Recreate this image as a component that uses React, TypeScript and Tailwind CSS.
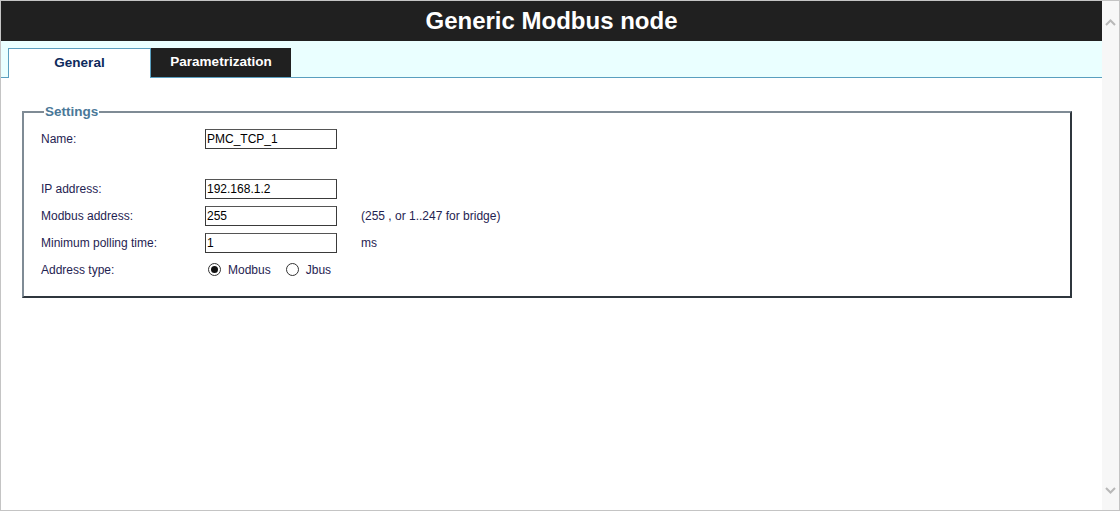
import React from 'react'

const font = { fontFamily: '"Liberation Sans", Arial, sans-serif' }

function Row({ label, children }: { label: string; children: React.ReactNode }) {
  return (
    <div className="flex items-center h-[27px]">
      <div className="w-[164px] text-[12px] text-[#1f2352]">{label}</div>
      {children}
    </div>
  )
}

function Field({ value }: { value: string }) {
  return (
    <input
      defaultValue={value}
      className="w-[132px] h-[20px] border border-[#3a3a3a] border-t-[#555] px-[1px] text-[12px] text-black bg-white outline-none"
      style={font}
    />
  )
}

function Radio({ checked, label }: { checked?: boolean; label: string }) {
  return (
    <label className="flex items-center gap-[7px] mr-[15px]">
      <span className="w-[13px] h-[13px] rounded-full border border-[#333] bg-white flex items-center justify-center">
        {checked && <span className="w-[7px] h-[7px] rounded-full bg-[#111]" />}
      </span>
      <span className="text-[12px] text-[#1f2352]">{label}</span>
    </label>
  )
}

export default function App() {
  return (
    <div className="w-[1120px] h-[511px] border border-[#c4c4c4] flex overflow-hidden bg-white" style={font}>
      <div className="flex-1 flex flex-col">
        <div className="h-[40px] bg-[#202020] text-white font-bold text-[24px] flex items-center justify-center">
          Generic Modbus node
        </div>
        <div className="h-[37px] bg-[#eaffff] border-b border-[#5a9fbf] flex items-end pl-[7px]">
          <div className="w-[143px] h-[30px] -mb-px bg-white border border-b-0 border-[#5a9fbf] flex items-center justify-center text-[13.5px] font-bold text-[#0d2a5c]">
            General
          </div>
          <div className="w-[140px] h-[29px] bg-[#202020] flex items-center justify-center text-[13.5px] font-bold text-white pb-[1px]">
            Parametrization
          </div>
        </div>
        <div className="pl-[21px] pr-[30px] pt-[24px]">
          <fieldset className="border-2 border-t-[#7f8b95] border-l-[#7f8b95] border-r-[#2f363d] border-b-[#2f363d] pl-[17px] pb-[13px] pt-[3px]">
            <legend className="ml-[3px] px-[1px] text-[13.5px] font-bold text-[#4a7898]">Settings</legend>
            <Row label="Name:">
              <Field value="PMC_TCP_1" />
            </Row>
            <div className="h-[23px]" />
            <Row label="IP address:">
              <Field value="192.168.1.2" />
            </Row>
            <Row label="Modbus address:">
              <Field value="255" />
              <span className="ml-[24px] text-[12px] text-[#1f2352]">(255 , or 1..247 for bridge)</span>
            </Row>
            <Row label="Minimum polling time:">
              <Field value="1" />
              <span className="ml-[24px] text-[12px] text-[#1f2352]">ms</span>
            </Row>
            <Row label="Address type:">
              <div className="flex items-center pl-[3px]">
                <Radio checked label="Modbus" />
                <Radio label="Jbus" />
              </div>
            </Row>
          </fieldset>
        </div>
      </div>
      <div className="w-[17px] shrink-0 bg-[#f7f7f7] flex flex-col items-center justify-between pt-[18px] pb-[16px]">
        <svg width="11" height="7" viewBox="0 0 11 7">
          <path d="M1 6 L5.5 1.5 L10 6" fill="none" stroke="#b8b8b8" strokeWidth="2" />
        </svg>
        <svg width="11" height="7" viewBox="0 0 11 7">
          <path d="M1 1 L5.5 5.5 L10 1" fill="none" stroke="#b8b8b8" strokeWidth="2" />
        </svg>
      </div>
    </div>
  )
}
